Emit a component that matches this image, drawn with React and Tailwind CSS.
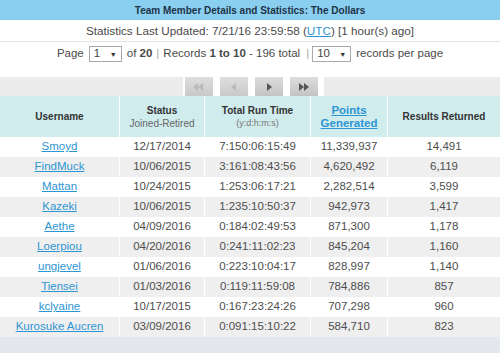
import React from "react";

const rows = [
  ["Smoyd", "12/17/2014", "7:150:06:15:49", "11,339,937", "14,491"],
  ["FindMuck", "10/06/2015", "3:161:08:43:56", "4,620,492", "6,119"],
  ["Mattan", "10/24/2015", "1:253:06:17:21", "2,282,514", "3,599"],
  ["Kazeki", "10/06/2015", "1:235:10:50:37", "942,973", "1,417"],
  ["Aethe", "04/09/2016", "0:184:02:49:53", "871,300", "1,178"],
  ["Loerpiou", "04/20/2016", "0:241:11:02:23", "845,204", "1,160"],
  ["ungjevel", "01/06/2016", "0:223:10:04:17", "828,997", "1,140"],
  ["Tiensei", "01/03/2016", "0:119:11:59:08", "784,886", "857"],
  ["kclyaine", "10/17/2015", "0:167:23:24:26", "707,298", "960"],
  ["Kurosuke Aucren", "03/09/2016", "0:091:15:10:22", "584,710", "823"],
];

function Select({ value, w }) {
  return (
    <div className={`${w} h-[16px] border border-[#a9a9a9] bg-white flex items-center justify-between px-[4px] text-[#444]`}>
      <span className="leading-none">{value}</span>
      <span className="text-[7px] leading-none text-[#333]">▼</span>
    </div>
  );
}

function PagerBtn({ children, disabled }) {
  return (
    <div
      className={`w-[28px] h-[19px] flex items-center justify-center ${
        disabled
          ? "bg-gradient-to-b from-[#dedede] to-[#c9c9c9]"
          : "bg-gradient-to-b from-[#dcdcdc] to-[#c4c4c4]"
      }`}
    >
      <svg width="14" height="10" viewBox="0 0 14 10">{children}</svg>
    </div>
  );
}

export default function App() {
  const cols = ["w-[120px]", "w-[85px]", "w-[106px]", "w-[77px]", "flex-1"];
  return (
    <div className="w-[500px] h-[353px] bg-white overflow-hidden" style={{ fontFamily: '"Liberation Sans", Arial, sans-serif' }}>
      <div className="h-[20px] bg-[#8bcff0] flex items-center justify-center text-[10px] font-bold text-[#1c3448]">
        Team Member Details and Statistics: The Dollars
      </div>
      <div className="h-[22px] border-b border-[#e2e2e2] flex items-center justify-center text-[11.7px] text-[#4a4a4a]">
        Statistics Last Updated: 7/21/16 23:59:58 (<span className="underline text-[#2e95d3]">UTC</span>) [1 hour(s) ago]
      </div>
      <div className="h-[24px] flex items-center justify-center text-[11.5px] text-[#4a4a4a]">
        <span>Page</span>
        <span className="ml-[5px]"><Select value="1" w="w-[33px]" /></span>
        <span className="ml-[5px]">of <b>20</b></span>
        <span className="mx-[4px] text-[#aaa]">|</span>
        <span>Records <b>1 to 10</b> - 196 total</span>
        <span className="ml-[6px] mr-[3px] text-[#aaa]">|</span>
        <Select value="10" w="w-[39px]" />
        <span className="ml-[5px]">records per page</span>
      </div>
      <div className="h-[11px]" />
      <div className="h-[19px] flex">
        <div className="w-[183px] bg-[#ececec]" />
        <div className="w-[141px] flex gap-[7px] pl-[2px]">
          <PagerBtn disabled>
            <path d="M1 5 L6 1 L6 9 Z M6 5 L11 1 L11 9 Z" fill="#b9b9b9" />
          </PagerBtn>
          <PagerBtn disabled>
            <path d="M4 5 L9 1 L9 9 Z" fill="#b9b9b9" />
          </PagerBtn>
          <PagerBtn>
            <path d="M5 1 L10 5 L5 9 Z" fill="#555" />
          </PagerBtn>
          <PagerBtn>
            <path d="M2 1 L7 5 L2 9 Z M7 1 L12 5 L7 9 Z" fill="#555" />
          </PagerBtn>
        </div>
        <div className="flex-1 bg-[#ececec]" />
      </div>
      <div className="h-[41px] flex bg-[#d0eced] text-[10px] text-[#333]">
        <div className={`${cols[0]} border-r border-white flex items-center justify-center font-bold`}>Username</div>
        <div className={`${cols[1]} border-r border-white flex flex-col items-center justify-center leading-[13px]`}>
          <span className="font-bold">Status</span>
          <span className="text-[#666]">Joined-Retired</span>
        </div>
        <div className={`${cols[2]} border-r border-white flex flex-col items-center justify-center leading-[13px]`}>
          <span className="font-bold">Total Run Time</span>
          <span className="text-[#777] text-[9px]">(y:d:h:m:s)</span>
        </div>
        <div className={`${cols[3]} border-r border-white flex flex-col items-center justify-center leading-[13px] text-[11.5px] font-bold text-[#2e95d3] underline`}>
          <span>Points</span>
          <span>Generated</span>
        </div>
        <div className={`${cols[4]} flex items-center justify-center font-bold`}>Results Returned</div>
      </div>
      {rows.map((r, i) => (
        <div key={i} className={`h-[20px] flex text-[11.5px] text-[#4d4d4d] ${i % 2 ? "bg-[#efefef]" : "bg-white"}`}>
          {r.map((c, j) => (
            <div key={j} className={`${cols[j]} ${j < 4 ? "border-r border-white" : ""} flex items-center justify-center`}>
              {j === 0 ? <span className="text-[#2e95d3] underline">{c}</span> : c}
            </div>
          ))}
        </div>
      ))}
      <div className="h-[16px] bg-[#e4e8ee]" />
    </div>
  );
}
